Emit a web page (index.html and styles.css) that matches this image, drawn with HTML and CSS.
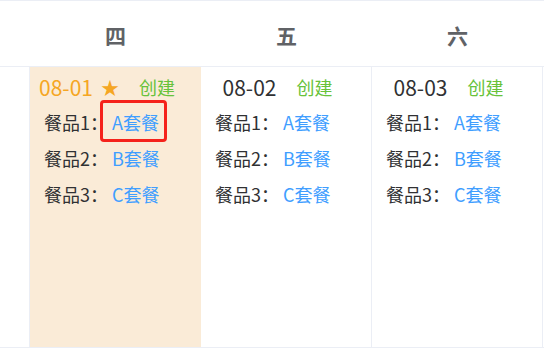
FILE: index.html
```html
<!DOCTYPE html>
<html lang="zh">
<head>
<meta charset="utf-8">
<title>Calendar</title>
<link rel="stylesheet" href="styles.css">
</head>
<body>
<div class="table">
  <div class="head">
    <div class="hcell"></div>
    <div class="hcell">四</div>
    <div class="hcell">五</div>
    <div class="hcell">六</div>
    <div class="hcell"></div>
  </div>
  <div class="body">
    <div class="cell side"></div>
    <div class="cell today">
      <div class="date-row">
        <span class="date">08-01</span><span class="star">★</span><span class="create">创建</span>
      </div>
      <div class="meal"><span class="label">餐品1：</span><span class="value marked">A套餐</span></div>
      <div class="meal"><span class="label">餐品2：</span><span class="value">B套餐</span></div>
      <div class="meal"><span class="label">餐品3：</span><span class="value">C套餐</span></div>
    </div>
    <div class="cell lined">
      <div class="date-row">
        <span class="date">08-02</span><span class="create">创建</span>
      </div>
      <div class="meal"><span class="label">餐品1：</span><span class="value">A套餐</span></div>
      <div class="meal"><span class="label">餐品2：</span><span class="value">B套餐</span></div>
      <div class="meal"><span class="label">餐品3：</span><span class="value">C套餐</span></div>
    </div>
    <div class="cell lined">
      <div class="date-row">
        <span class="date">08-03</span><span class="create">创建</span>
      </div>
      <div class="meal"><span class="label">餐品1：</span><span class="value">A套餐</span></div>
      <div class="meal"><span class="label">餐品2：</span><span class="value">B套餐</span></div>
      <div class="meal"><span class="label">餐品3：</span><span class="value">C套餐</span></div>
    </div>
    <div class="cell tail"></div>
  </div>
</div>
</body>
</html>
```

FILE: styles.css
```css
* { box-sizing: border-box; }
html, body {
  margin: 0;
  padding: 0;
  background: #ffffff;
}
body {
  font-family: "Noto Sans CJK SC", "Noto Sans", sans-serif;
  color: #303133;
  width: 544px;
  height: 352px;
  overflow: hidden;
}
.table {
  width: 544px;
}
.head,
.body {
  display: grid;
  grid-template-columns: 30px 171px 171px 171px 1fr;
}
.head {
  height: 67px;
  border-top: 1px solid #ebeef5;
  border-bottom: 1px solid #ebeef5;
}
.hcell {
  display: flex;
  align-items: center;
  justify-content: center;
  font-size: 21px;
  font-weight: 700;
  color: #606266;
  padding-top: 2px;
}
.body {
  height: 281px;
  border-bottom: 1px solid #ebeef5;
}
.cell {
  padding-top: 3px;
}
.side,
.lined {
  border-right: 1px solid #ebeef5;
}
.today {
  background: #faebd7;
}
.date-row {
  display: flex;
  justify-content: center;
  align-items: center;
  height: 34px;
  padding-right: 17px;
}
.date {
  font-size: 21px;
  line-height: 36px;
}
.today .date,
.star {
  color: #f5a623;
}
.star {
  font-size: 18px;
  margin-left: 8px;
  line-height: 36px;
}
.create {
  font-size: 18px;
  color: #67c23a;
  margin-left: 20px;
  line-height: 36px;
}
.meal {
  display: flex;
  align-items: center;
  height: 36px;
  padding-left: 14px;
  font-size: 18px;
  line-height: 36px;
}
.label {
  width: 68px;
}
.value {
  color: #409eff;
  position: relative;
  display: inline-block;
}
.marked::after {
  content: "";
  position: absolute;
  left: -12px;
  right: -8px;
  top: -4px;
  bottom: -2px;
  border: 3px solid #f5221b;
  border-radius: 4px;
}
```
